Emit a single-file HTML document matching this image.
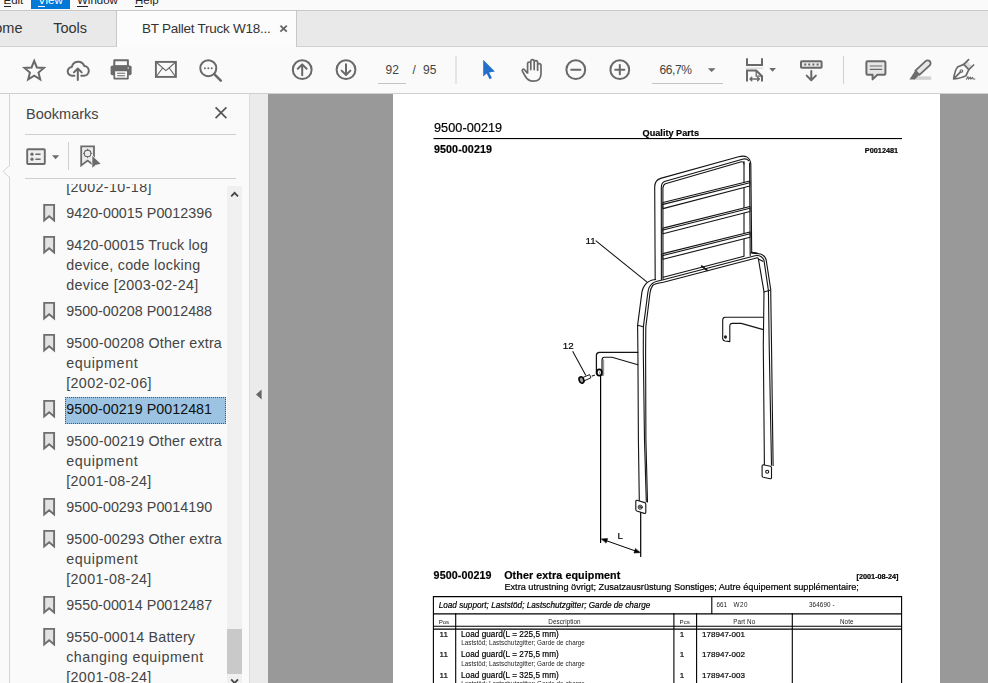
<!DOCTYPE html>
<html lang="en">
<head>
<meta charset="utf-8">
<title>BT Pallet Truck W18</title>
<style>
html,body{margin:0;padding:0;}
body{width:988px;height:683px;overflow:hidden;position:relative;background:#fff;font-family:"Liberation Sans",sans-serif;color:#333;}
.abs{position:absolute;}
#menubar{left:0;top:0;width:988px;height:10px;background:#fafafa;overflow:hidden;}
#menubar span{position:absolute;top:-7px;font-size:11.5px;line-height:14px;color:#222;white-space:nowrap;}
#menubar u{text-decoration:none;border-bottom:1px solid currentColor;}
#menubar .hl{position:absolute;left:31px;top:0;width:39px;height:9px;background:#0078d7;}
#menuline{left:0;top:10px;width:988px;height:1px;background:#c8c8c8;}
#tabbar{left:0;top:11px;width:988px;height:35px;background:#e9e9e9;}
#tabline{left:0;top:46px;width:988px;height:1px;background:#d0d0d0;}
#tabactive{left:116px;top:11px;width:181px;height:36px;background:#fcfcfc;border-left:1px solid #c8c8c8;border-right:1px solid #c8c8c8;box-sizing:border-box;}
.tabtxt{font-size:14.5px;line-height:20px;color:#333;white-space:nowrap;}
#toolbar{left:0;top:47px;width:988px;height:46px;background:#fafafa;}
#toolline{left:0;top:93px;width:988px;height:1px;background:#cfcfcf;}
.tbtxt{font-size:12px;line-height:16px;color:#444;white-space:nowrap;}
#leftstrip{left:0;top:94px;width:9px;height:589px;background:#fafafa;}
#leftline{left:9px;top:94px;width:1px;height:589px;background:#d4d4d4;}
#panel{left:10px;top:94px;width:239px;height:589px;background:#fafafa;}
#panelline{left:249px;top:94px;width:1px;height:589px;background:#dcdcdc;}
#gutter{left:250px;top:94px;width:18px;height:589px;background:#ebebeb;}
#docbg{left:268px;top:94px;width:720px;height:589px;background:#999;}
#page{left:393px;top:94px;width:547px;height:589px;background:#fff;}
.sep{height:1px;background:#cfcfcf;left:25px;width:211px;}
.bm{left:66.2px;font-size:14.3px;line-height:20px;color:#444;white-space:nowrap;}
#sel{left:65px;top:397px;width:161px;height:27px;background:#9dc3e2;border:1px dotted #555;box-sizing:border-box;}
#sbtrack{left:227px;top:186px;width:15px;height:497px;background:#f0f0f0;}
#sbthumb{left:227px;top:629px;width:15px;height:45px;background:#c9c9c9;}
.pdf{color:#000;white-space:nowrap;-webkit-text-stroke:0.2px #000;}
.pdf.sm{-webkit-text-stroke:0;color:#222;}
</style>
</head>
<body>
<!-- menu bar -->
<div id="menubar" class="abs">
  <div class="hl"></div>
  <span style="left:3.5px"><u>E</u>dit</span>
  <span style="left:38px;color:#fff"><u>V</u>iew</span>
  <span style="left:77px"><u>W</u>indow</span>
  <span style="left:135px"><u>H</u>elp</span>
</div>
<div id="menuline" class="abs"></div>
<!-- tab bar -->
<div id="tabbar" class="abs"></div>
<div id="tabline" class="abs"></div>
<div id="tabactive" class="abs"></div>
<div class="abs tabtxt" style="left:-16.2px;top:18.4px">Home</div>
<div class="abs tabtxt" style="left:53.2px;top:18.4px">Tools</div>
<div class="abs tabtxt" style="left:142px;top:18.8px;font-size:13.5px;letter-spacing:-0.25px">BT Pallet Truck W18...</div>
<!-- toolbar -->
<div id="toolbar" class="abs"></div>
<div id="toolline" class="abs"></div>
<div class="abs tbtxt" style="left:385.5px;top:61.6px">92</div>
<div class="abs tbtxt" style="left:412.6px;top:61.6px">/</div>
<div class="abs tbtxt" style="left:423px;top:61.6px">95</div>
<div class="abs tbtxt" style="left:659.6px;top:61.6px;letter-spacing:-0.45px">66,7%</div>
<!-- left panel -->
<div id="leftstrip" class="abs"></div>
<div id="leftline" class="abs"></div>
<div id="panel" class="abs"></div>
<div id="panelline" class="abs"></div>
<div id="gutter" class="abs"></div>
<div id="docbg" class="abs"></div>
<div id="page" class="abs"></div>
<div class="abs" style="left:26px;top:103.8px;font-size:14.5px;line-height:20px;color:#444;">Bookmarks</div>
<div class="abs sep" style="top:134px"></div>
<div class="abs sep" style="top:178px"></div>
<div id="sbtrack" class="abs"></div>
<div id="sbthumb" class="abs"></div>
<div id="sel" class="abs"></div>
<!-- toolbar icons -->
<svg class="abs" style="left:0;top:47px" width="988" height="46" viewBox="0 47 988 46" fill="none" stroke="#696969" stroke-width="2" stroke-linecap="round" stroke-linejoin="round">
  <!-- star -->
  <path d="M34.20 60.90 L36.85 67.46 L43.90 67.95 L38.48 72.49 L40.20 79.35 L34.20 75.60 L28.20 79.35 L29.92 72.49 L24.50 67.95 L31.55 67.46 Z" stroke-linejoin="miter"/>
  <!-- cloud upload -->
  <path d="M74.4 75.7 H72.3 A4.4 4.4 0 0 1 71.9 66.9 A6.4 6.4 0 0 1 84.2 65.9 A4.9 4.9 0 0 1 83.6 75.7 H81.3"/>
  <path d="M77.8 80 V68.6 M73.9 72.4 L77.8 68.5 L81.7 72.4"/>
  <!-- printer -->
  <rect x="114.3" y="60.2" width="13.6" height="6" fill="#fafafa"/>
  <rect x="110.6" y="65.4" width="21" height="9.8" rx="1.8" fill="#6b6b6b" stroke="none"/>
  <rect x="114.3" y="70.4" width="13.6" height="8.2" fill="#fafafa" stroke-width="1.7"/>
  <path d="M117.6 73.3 H124.6 M117.6 75.8 H124.6" stroke-width="1.1"/>
  <circle cx="128.3" cy="68" r="0.8" fill="#ddd" stroke="none"/>
  <!-- mail -->
  <rect x="155.9" y="61.9" width="20" height="15" stroke-width="1.9" stroke-linejoin="miter"/>
  <path d="M156.3 62.3 L165.9 70.6 L175.5 62.3 M156.3 76.5 L162.6 68 M175.5 76.5 L169.2 68" stroke-width="1.2"/>
  <!-- search -->
  <circle cx="208.3" cy="68.2" r="8"/>
  <path d="M214.3 74.2 L220.8 80.7" stroke-width="2.6"/>
  <g fill="#6b6b6b" stroke="none"><circle cx="204.9" cy="68.3" r="1"/><circle cx="208.3" cy="68.3" r="1"/><circle cx="211.7" cy="68.3" r="1"/></g>
  <!-- page up / down -->
  <circle cx="302.2" cy="69.7" r="9.4"/>
  <path d="M302.2 75.2 V64.6 M297.8 68.8 L302.2 64.4 L306.6 68.8"/>
  <circle cx="346" cy="69.7" r="9.4"/>
  <path d="M346 64.2 V74.8 M341.6 70.6 L346 75 L350.4 70.6"/>
  <!-- field underlines / separators -->
  <path d="M378 83.5 H406 M652 83.5 H723" stroke="#c4c4c4" stroke-width="1" stroke-linecap="butt"/>
  <path d="M456 56 V84 M843.5 56 V84" stroke="#d0d0d0" stroke-width="1" stroke-linecap="butt"/>
  <!-- pointer (blue) -->
  <path d="M483.2 59.8 L483.2 76.6 L486.7 73.4 L489.6 79.2 L491.9 78.1 L489.1 72.4 L494.9 71.4 Z" fill="#2270c9" stroke="none"/>
  <!-- hand -->
  <path d="M527.6 73 V63.6 a1.6 1.6 0 0 1 3.2 0 V69.6 M530.8 69.6 V61.4 a1.7 1.7 0 0 1 3.4 0 V69.6 M534.2 69.6 V62.4 a1.7 1.7 0 0 1 3.4 0 V70.2 M537.6 70.2 V65.4 a1.7 1.7 0 0 1 3.4 0 V73.4 c0 5 -3 7.8 -7.8 7.8 c-3.9 0 -6.2 -1.8 -8.1 -5.2 l-2.7 -4.8 c-.8 -1.6 .9 -2.7 2.1 -1.4 l2.7 3.1" stroke-width="1.7"/>
  <!-- zoom out / in -->
  <circle cx="575.8" cy="69.7" r="9.4"/>
  <path d="M571.2 69.7 H580.4"/>
  <circle cx="619.8" cy="69.7" r="9.4"/>
  <path d="M615.2 69.7 H624.4 M619.8 65.1 V74.3"/>
  <!-- dropdown arrows -->
  <path d="M707.8 68.2 H715.6 L711.7 72 Z M769.2 68 H776 L772.6 71.8 Z" fill="#6b6b6b" stroke="none"/>
  <!-- fit width icon -->
  <path d="M747 58.2 V65 H762 V58.2" stroke-linecap="butt" stroke-linejoin="miter"/>
  <path d="M746 68.2 H763" stroke="#cfcfcf" stroke-width="1"/>
  <path d="M747 81.6 V70.6 H756.2 L762 76.2 V81.6" stroke-linecap="butt" stroke-linejoin="miter"/>
  <path d="M756.2 70.6 V76.2 H762" stroke-width="1.3"/>
  <path d="M750 79 H759.4 M751.8 77.2 L750 79 L751.8 80.8 M757.6 77.2 L759.4 79 L757.6 80.8" stroke-width="1.4"/>
  <!-- scroll mode icon -->
  <rect x="801" y="61.2" width="20.6" height="6.6" rx="0.8" fill="#e9e9e9"/>
  <g fill="#6b6b6b" stroke="none"><rect x="804.2" y="63.5" width="2" height="2"/><rect x="808.2" y="63.5" width="2" height="2"/><rect x="812.4" y="63.5" width="2" height="2"/><rect x="816.6" y="63.5" width="2" height="2"/></g>
  <path d="M811.3 71 V80 M806.7 75.6 L811.3 80.2 L815.9 75.6"/>
  <!-- comment -->
  <path d="M867.6 61.2 H884.2 a1.2 1.2 0 0 1 1.2 1.2 V73.6 a1.2 1.2 0 0 1 -1.2 1.2 H877.4 L872.6 79.4 V74.8 H867.6 a1.2 1.2 0 0 1 -1.2 -1.2 V62.4 a1.2 1.2 0 0 1 1.2 -1.2 Z" fill="#e6e6e6"/>
  <path d="M870.2 66 H881.8 M870.2 69.3 H881.8" stroke-width="1.2"/>
  <!-- highlighter -->
  <rect x="914.6" y="76.4" width="16.6" height="3.4" fill="#d2d2d2" stroke="none"/>
  <path d="M915.4 70.6 L925.6 61.2 a2.9 2.9 0 0 1 4.1 4.2 L919.4 74.8 Z" fill="#e6e6e6" stroke-width="1.8"/>
  <path d="M915 71 L918.9 75.2 L914.8 79.6 H909.4 Z" fill="#6b6b6b" stroke="none"/>
  <!-- sign pen -->
  <path d="M966.6 60.6 L972.6 66.8 L968.8 69.6 L963.6 64.2 Z" fill="#dcdcdc" stroke="none"/>
  <path d="M953.6 79 C954.4 73.6 955.4 69.4 957.6 67 L963.8 64.4 L968.8 69.6 L966 75.6 C962.8 77.6 958.6 78.4 953.6 79 Z M953.9 78.7 L960.6 71.8" stroke-width="1.7"/>
  <circle cx="961.4" cy="71" r="1.3" stroke-width="1.1"/>
  <path d="M963.8 64.4 L968.6 59.6 M968.8 69.6 L973.6 65" stroke-width="1.7"/>
  <path d="M966.4 79.2 l1.6 -2.6 l.6 2.6 l1.6 -2.2 l.6 2.2 l1.6 -1.8 l.8 1.6 h1.6" stroke-width="1.1"/>
</svg>
<!-- tab close -->
<svg class="abs" style="left:278px;top:23px" width="12" height="12" viewBox="278 23 12 12" fill="none" stroke="#666" stroke-width="1.9"><path d="M280.4 25.6 L286.8 31.6 M286.8 25.6 L280.4 31.6"/></svg>
<!-- panel icons -->
<svg class="abs" style="left:0;top:94px" width="268" height="589" viewBox="0 94 268 589" fill="none" stroke="#6b6b6b" stroke-width="1.9" stroke-linejoin="round">
  <!-- notch -->
  <path d="M9.5 165.5 L3 171.5 L9.5 177.5" fill="#fafafa" stroke="#d4d4d4" stroke-width="1"/>
  <path d="M9.5 166.6 V176.4" stroke="#fafafa" stroke-width="1.4"/>
  <!-- close X -->
  <path d="M215.6 107.4 L226.4 118.2 M226.4 107.4 L215.6 118.2" stroke="#555" stroke-width="1.7"/>
  <!-- list icon -->
  <rect x="27.2" y="149.2" width="17.6" height="14.8" rx="0.8" fill="#efefef"/>
  <g fill="#6b6b6b" stroke="none"><circle cx="32" cy="154.2" r="1.6"/><circle cx="32" cy="159.2" r="1.6"/></g>
  <path d="M35.4 154.2 H40.6 M35.4 159.2 H40.6" stroke-width="1.6"/>
  <path d="M52 155.2 H59.2 L55.6 159.2 Z" fill="#6b6b6b" stroke="none"/>
  <path d="M68.5 142 V170" stroke="#d0d0d0" stroke-width="1"/>
  <!-- find bookmark icon -->
  <path d="M81.2 146.4 H94 V165.4 L87.6 160.6 L81.2 165.4 Z" fill="#ececec" stroke-width="1.8" stroke-linejoin="miter"/>
  <circle cx="87.6" cy="153.4" r="3.3" stroke-width="1.1"/>
  <path d="M87.6 148.8 V150.8 M87.6 156 V158 M83 153.4 H85 M90.2 153.4 H92.2" stroke-width="1"/>
  <path d="M91.6 154.6 V169 L95.4 166 L102 164.4 Z" fill="#fafafa" stroke="none"/><path d="M92.3 156 V167.8 L95.4 165 L100.6 163.7 Z" fill="#6b6b6b" stroke="none"/>
  <!-- scrollbar arrows -->
  <path d="M231.2 196.4 L234.6 192.8 L238 196.4" stroke="#444" stroke-width="1.8" stroke-linejoin="miter"/>
  <path d="M231.2 679.4 L234.6 683 L238 679.4" stroke="#444" stroke-width="1.8" stroke-linejoin="miter"/>
  <!-- gutter collapse arrow -->
  <path d="M261.6 389.6 V399.4 L256 394.5 Z" fill="#666" stroke="none"/>
</svg>
<!-- bookmark items -->
<div id="bmclip" class="abs" style="left:0px;top:184px;width:227px;height:499px;overflow:hidden;">
<div class="abs bm" style="top:-7.2px;letter-spacing:0.38px">[2002-10-18]</div>
<div class="abs bm" style="top:18.8px;letter-spacing:0.03px">9420-00015 P0012396</div>
<svg class="abs" style="left:42px;top:19px" width="15" height="20" viewBox="0 0 15 20"><path d="M2.2 1.9 H12.1 V17.4 L7.15 13.3 L2.2 17.4 Z" fill="#e2e2e2" stroke="#6e6e6e" stroke-width="1.9" stroke-linejoin="miter"/></svg>
<div class="abs bm" style="top:50.8px;letter-spacing:0.18px">9420-00015 Truck log</div>
<svg class="abs" style="left:42px;top:51px" width="15" height="20" viewBox="0 0 15 20"><path d="M2.2 1.9 H12.1 V17.4 L7.15 13.3 L2.2 17.4 Z" fill="#e2e2e2" stroke="#6e6e6e" stroke-width="1.9" stroke-linejoin="miter"/></svg>
<div class="abs bm" style="top:70.8px;letter-spacing:0.28px">device, code locking</div>
<div class="abs bm" style="top:90.8px;letter-spacing:0.31px">device [2003-02-24]</div>
<div class="abs bm" style="top:116.8px;letter-spacing:0.02px">9500-00208 P0012488</div>
<svg class="abs" style="left:42px;top:117px" width="15" height="20" viewBox="0 0 15 20"><path d="M2.2 1.9 H12.1 V17.4 L7.15 13.3 L2.2 17.4 Z" fill="#e2e2e2" stroke="#6e6e6e" stroke-width="1.9" stroke-linejoin="miter"/></svg>
<div class="abs bm" style="top:148.8px;letter-spacing:0.18px">9500-00208 Other extra</div>
<svg class="abs" style="left:42px;top:149px" width="15" height="20" viewBox="0 0 15 20"><path d="M2.2 1.9 H12.1 V17.4 L7.15 13.3 L2.2 17.4 Z" fill="#e2e2e2" stroke="#6e6e6e" stroke-width="1.9" stroke-linejoin="miter"/></svg>
<div class="abs bm" style="top:168.8px;letter-spacing:0.59px">equipment</div>
<div class="abs bm" style="top:188.8px;letter-spacing:0.38px">[2002-02-06]</div>
<div class="abs bm" style="top:214.8px;letter-spacing:0.02px;color:#111">9500-00219 P0012481</div>
<svg class="abs" style="left:42px;top:215px" width="15" height="20" viewBox="0 0 15 20"><path d="M2.2 1.9 H12.1 V17.4 L7.15 13.3 L2.2 17.4 Z" fill="#e2e2e2" stroke="#6e6e6e" stroke-width="1.9" stroke-linejoin="miter"/></svg>
<div class="abs bm" style="top:246.8px;letter-spacing:0.18px">9500-00219 Other extra</div>
<svg class="abs" style="left:42px;top:247px" width="15" height="20" viewBox="0 0 15 20"><path d="M2.2 1.9 H12.1 V17.4 L7.15 13.3 L2.2 17.4 Z" fill="#e2e2e2" stroke="#6e6e6e" stroke-width="1.9" stroke-linejoin="miter"/></svg>
<div class="abs bm" style="top:266.8px;letter-spacing:0.59px">equipment</div>
<div class="abs bm" style="top:286.8px;letter-spacing:0.37px">[2001-08-24]</div>
<div class="abs bm" style="top:312.8px;letter-spacing:0.03px">9500-00293 P0014190</div>
<svg class="abs" style="left:42px;top:313px" width="15" height="20" viewBox="0 0 15 20"><path d="M2.2 1.9 H12.1 V17.4 L7.15 13.3 L2.2 17.4 Z" fill="#e2e2e2" stroke="#6e6e6e" stroke-width="1.9" stroke-linejoin="miter"/></svg>
<div class="abs bm" style="top:344.8px;letter-spacing:0.18px">9500-00293 Other extra</div>
<svg class="abs" style="left:42px;top:345px" width="15" height="20" viewBox="0 0 15 20"><path d="M2.2 1.9 H12.1 V17.4 L7.15 13.3 L2.2 17.4 Z" fill="#e2e2e2" stroke="#6e6e6e" stroke-width="1.9" stroke-linejoin="miter"/></svg>
<div class="abs bm" style="top:364.8px;letter-spacing:0.59px">equipment</div>
<div class="abs bm" style="top:384.8px;letter-spacing:0.37px">[2001-08-24]</div>
<div class="abs bm" style="top:410.8px;letter-spacing:0.03px">9550-00014 P0012487</div>
<svg class="abs" style="left:42px;top:411px" width="15" height="20" viewBox="0 0 15 20"><path d="M2.2 1.9 H12.1 V17.4 L7.15 13.3 L2.2 17.4 Z" fill="#e2e2e2" stroke="#6e6e6e" stroke-width="1.9" stroke-linejoin="miter"/></svg>
<div class="abs bm" style="top:442.8px;letter-spacing:0.19px">9550-00014 Battery</div>
<svg class="abs" style="left:42px;top:443px" width="15" height="20" viewBox="0 0 15 20"><path d="M2.2 1.9 H12.1 V17.4 L7.15 13.3 L2.2 17.4 Z" fill="#e2e2e2" stroke="#6e6e6e" stroke-width="1.9" stroke-linejoin="miter"/></svg>
<div class="abs bm" style="top:462.8px;letter-spacing:0.48px">changing equipment</div>
<div class="abs bm" style="top:482.8px;letter-spacing:0.37px">[2001-08-24]</div>

</div>
<!-- PAGE START -->
<svg class="abs" style="left:393px;top:94px" width="547" height="589" viewBox="393 94 547 589" fill="none" stroke="#141414" stroke-width="1.12" stroke-linecap="round" stroke-linejoin="round">
  <!-- header rule -->
  <path d="M433.5 138.5 H902" stroke="#000" stroke-width="1" stroke-linecap="butt"/><path d="M433.5 139.2 H902" stroke="#000" stroke-opacity="0.25" stroke-width="0.6" stroke-linecap="butt"/>
  <!-- table -->
  <g stroke="#000" stroke-width="1.1" stroke-linecap="butt">
    <path d="M433.4 596 V683 M901.6 596 V683 M432.9 596.6 H902.1 M433.4 613.9 H901.6 M433.4 626.2 H901.6 M433.4 629.1 H901.6"/>
    <path d="M711.8 596.6 V613.9 M455.7 613 V683 M673.9 613 V683 M696.6 613 V683 M792.3 613 V683"/>
  </g>
  <!-- ===== grill ===== -->
  <!-- right post (behind rails) -->
  <path d="M744 161.6 V255.8 M749.6 163 L750.2 255.6"/>
  <!-- outer contour: left post, top rail, right post -->
  <path d="M655.2 279.6 L654.7 187 Q654.8 180.2 660.6 178.4 L738.6 156.7 Q749.6 153.9 750.8 164 L751.7 252.4"/>
  <!-- top rail inner lines -->
  <path d="M661.4 279.4 L661.3 187.4 Q661.4 183 664.4 181.5 L742.4 159.2 Q746.6 158.2 748.6 160.6"/>
  <path d="M663 278.4 L662.9 188.4 Q663 185 665.4 183.8 L741.4 161.8 Q743.6 161.4 744 164"/>
  <!-- rails -->
  <g fill="#fff">
    <path d="M663 202.5 L749.8 181 V186 L663 208.6 Z"/>
    <path d="M663 228.1 L749.9 206.5 V211.5 L663 233.8 Z"/>
    <path d="M663 253.6 L750 232 V237.2 L663 259.3 Z"/>
  </g>
  <path d="M663 204.4 L749.8 182.7 M663 230 L749.9 208.2 M663 255.5 L750 233.7"/>
  <!-- ===== main frame ===== -->
  <!-- top tube lines A B C -->
  <path d="M663.2 277.3 L744 256.2"/>
  <path d="M663.2 279.7 L755 255.7 Q761.6 254.6 764 260.4 L768.4 290.4 L769.2 345 L771.5 465.2"/>
  <path d="M652.6 285.6 Q654 283.6 663.4 282.3 L757.3 257.7 L758.3 258.4 L764 291.8 L763.3 345 L764.4 464.8"/>
  <!-- outer top-right corner and right leg outer -->
  <path d="M751.6 252.6 L760.4 254 Q765 255.4 766.2 260 L770.7 289.4 L771.5 345 L773.1 465.4" />
  <path d="M751.6 252.6 L757 253.4" stroke-width="1.8"/>
  <path d="M764 292 L769.6 290.2 M758.8 259.3 L762.9 261.3"/>
  <!-- top-left corner and left leg -->
  <path d="M655.6 279.5 Q648.6 280.2 645.2 284.6 Q642.6 288 642 291.6 L637.6 325.4 L637.9 352 L638.4 440 L639.3 500.6"/>
  <path d="M663.2 279.7 L657 281.2 Q651.6 282.6 649.2 287.4 Q648.2 289.8 647.8 293 L643.4 326.6 L643.3 352 L644.5 440 L646.3 501.6"/>
  <path d="M652.6 285.6 Q650.6 288.4 650 293 L645.8 327 L645.6 352 L645.9 440 L647.5 502"/>
  <path d="M637.5 325.2 L643.4 326.8"/>
  <!-- center mark -->
  <path d="M701.6 266 L707.2 270.4" stroke-width="1.6"/>
  <!-- right bracket -->
  <path d="M763.2 317.2 H725 Q722.7 317.4 722.7 320 V338.6 Q722.9 340.6 725 341 L729.8 341.6 V325.6 Q729.9 323.5 732 323.4 H741.2 L763.3 329.6"/>
  <ellipse cx="725.5" cy="337" rx="0.9" ry="1.1" fill="#333"/>
  <!-- left bracket -->
  <path d="M637.8 352.3 H599.4 Q596.5 352.5 596.4 355.2 V373.6" stroke-width="1.25"/><path d="M603.4 375.2 V360" stroke="#999" stroke-width="1.6"/><path d="M602 375.4 V360 Q602.1 357.4 604.6 357.3 H612 L637.8 364.7"/>
  <ellipse cx="599.3" cy="372.5" rx="2.5" ry="3.1" fill="#fff" stroke="#000" stroke-width="1.7"/>
  <ellipse cx="599.5" cy="372.6" rx="0.7" ry="1.1" fill="#888" stroke="none"/>
  <!-- screw -->
  <path d="M582.6 377.6 L589.6 374.6 L590.9 377.8 L584 380.9" fill="#fff" stroke-width="1"/>
  <ellipse cx="581.5" cy="380" rx="2.3" ry="3.3" transform="rotate(-22 581.5 380)" fill="#999" stroke="#000" stroke-width="1.5"/>
  <path d="M592.2 376 L594.4 375.2" stroke-width="1.2"/>
  <!-- leaders -->
  <path d="M596 240.9 L646.8 281.9 M572.8 351.6 L585.6 375" stroke-width="1.05"/>
  <!-- dimension lines -->
  <path d="M600.6 376.4 V542.4 M640.7 509.4 V556.4" stroke="#000" stroke-width="1.2"/>
  <path d="M603 539.5 L638.6 552.1" stroke="#000" stroke-width="1"/>
  <path d="M601.6 539 L607.6 538.6 L606.2 542.8 Z M640 552.6 L634 553 L635.4 548.8 Z" fill="#000" stroke="#000" stroke-width="0.6"/>
  <!-- bottom plates -->
  <path d="M637 500.3 L644.8 502.6 Q645.8 503 645.8 504.2 V512.4 Q645.6 513.7 644.3 513.4 L636.8 511 Q635.8 510.6 635.8 509.4 V501.4 Q635.9 500.2 637 500.3 Z" fill="#fff"/>
  <circle cx="640.2" cy="507.2" r="2.1" fill="#fff" stroke-width="0.9"/><circle cx="640.2" cy="507.2" r="0.9" stroke-width="0.8"/>
  <path d="M763.2 464.8 L770.4 466.2 Q771.5 466.5 771.5 467.6 V477.6 Q771.4 478.9 770.2 478.7 L763.2 477.2 Q762.1 476.9 762.1 475.8 V466 Q762.2 464.8 763.2 464.8 Z" fill="#fff"/>
  <circle cx="767.2" cy="471.8" r="1.5"/>
</svg>
<div class="abs" id="pdftext" style="left:0;top:0;width:988px;height:683px;will-change:transform;">
<div class="abs pdf" style="left:434.0px;top:121px;font-size:12.67px;line-height:15px;letter-spacing:0.062px;">9500-00219</div>
<div class="abs pdf" style="left:642.6px;top:127px;font-size:9.10px;line-height:12px;font-weight:bold;letter-spacing:0.022px;">Quality Parts</div>
<div class="abs pdf" style="left:434.0px;top:143px;font-size:10.70px;line-height:13px;font-weight:bold;letter-spacing:0.094px;">9500-00219</div>
<div class="abs pdf" style="left:864.8px;top:146px;font-size:7.30px;line-height:10px;font-weight:bold;letter-spacing:0.015px;">P0012481</div>
<div class="abs pdf" style="left:585.6px;top:235px;font-size:9.80px;line-height:12px;">11</div>
<div class="abs pdf" style="left:562.8px;top:340px;font-size:9.80px;line-height:12px;">12</div>
<div class="abs pdf" style="left:617.6px;top:530px;font-size:9.80px;line-height:12px;">L</div>
<div class="abs pdf" style="left:433.6px;top:569px;font-size:10.70px;line-height:13px;font-weight:bold;letter-spacing:0.094px;">9500-00219</div>
<div class="abs pdf" style="left:504.2px;top:569px;font-size:10.70px;line-height:13px;font-weight:bold;letter-spacing:0.103px;">Other extra equipment</div>
<div class="abs pdf" style="left:856.6px;top:572px;font-size:7.30px;line-height:10px;font-weight:bold;letter-spacing:-0.024px;">[2001-08-24]</div>
<div class="abs pdf" style="left:504.4px;top:581px;font-size:9.20px;line-height:12px;letter-spacing:-0.012px;">Extra utrustning övrigt; Zusatzausrüstung Sonstiges; Autre équipement supplémentaire;</div>
<div class="abs pdf" style="left:438.7px;top:600px;font-size:8.20px;line-height:11px;font-style:italic;letter-spacing:0.007px;">Load support; Laststöd; Lastschutzgitter; Garde de charge</div>
<div class="abs pdf sm" style="left:716.6px;top:600px;font-size:6.30px;line-height:9px;">661</div>
<div class="abs pdf sm" style="left:733.6px;top:600px;font-size:6.30px;line-height:9px;letter-spacing:0.482px;">W20</div>
<div class="abs pdf sm" style="left:809.0px;top:600px;font-size:6.30px;line-height:9px;letter-spacing:0.093px;">364690 -</div>
<div class="abs pdf sm" style="left:438.7px;top:617px;font-size:6.20px;line-height:9px;letter-spacing:-0.091px;">Pos</div>
<div class="abs pdf sm" style="left:548.3px;top:617px;font-size:6.30px;line-height:9px;letter-spacing:0.082px;">Description</div>
<div class="abs pdf sm" style="left:679.6px;top:617px;font-size:6.20px;line-height:9px;letter-spacing:0.024px;">Pcs</div>
<div class="abs pdf sm" style="left:733.3px;top:617px;font-size:6.30px;line-height:9px;letter-spacing:0.092px;">Part No</div>
<div class="abs pdf sm" style="left:840.0px;top:617px;font-size:6.30px;line-height:9px;letter-spacing:0.072px;">Note</div>
<div class="abs pdf" style="left:439.5px;top:629px;font-size:8.10px;line-height:11px;">11</div>
<div class="abs pdf" style="left:461.0px;top:629px;font-size:8.20px;line-height:11px;letter-spacing:0.039px;">Load guard(L = 225,5 mm)</div>
<div class="abs pdf" style="left:679.8px;top:629px;font-size:8.10px;line-height:11px;">1</div>
<div class="abs pdf" style="left:702.1px;top:630px;font-size:8.00px;line-height:10px;letter-spacing:0.008px;">178947-001</div>
<div class="abs pdf sm" style="left:461.3px;top:638px;font-size:6.30px;line-height:9px;letter-spacing:0.033px;">Laststöd; Lastschutzgitter; Garde de charge</div>
<div class="abs pdf" style="left:439.5px;top:649px;font-size:8.10px;line-height:11px;">11</div>
<div class="abs pdf" style="left:461.0px;top:649px;font-size:8.20px;line-height:11px;letter-spacing:0.039px;">Load guard(L = 275,5 mm)</div>
<div class="abs pdf" style="left:679.8px;top:649px;font-size:8.10px;line-height:11px;">1</div>
<div class="abs pdf" style="left:702.1px;top:650px;font-size:8.00px;line-height:10px;letter-spacing:0.008px;">178947-002</div>
<div class="abs pdf sm" style="left:461.3px;top:659px;font-size:6.30px;line-height:9px;letter-spacing:0.033px;">Laststöd; Lastschutzgitter; Garde de charge</div>
<div class="abs pdf" style="left:439.5px;top:670px;font-size:8.10px;line-height:11px;">11</div>
<div class="abs pdf" style="left:461.0px;top:670px;font-size:8.20px;line-height:11px;letter-spacing:0.039px;">Load guard(L = 325,5 mm)</div>
<div class="abs pdf" style="left:679.8px;top:670px;font-size:8.10px;line-height:11px;">1</div>
<div class="abs pdf" style="left:702.1px;top:671px;font-size:8.00px;line-height:10px;letter-spacing:0.008px;">178947-003</div>
<div class="abs pdf sm" style="left:461.3px;top:679px;font-size:6.30px;line-height:9px;letter-spacing:0.033px;">Laststöd; Lastschutzgitter; Garde de charge</div>
</div>
<!-- PAGE END -->
</body>
</html>
